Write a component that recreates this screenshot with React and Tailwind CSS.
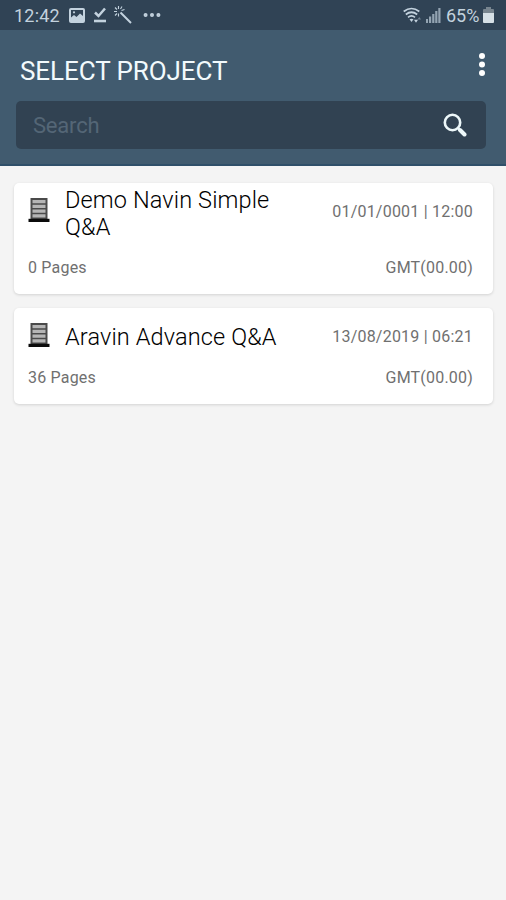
import { MoreHorizontal } from "lucide-react";

const projects = [
  {
    name: "Demo Navin Simple Q&A",
    date: "01/01/0001 | 12:00",
    pages: "0 Pages",
    zone: "GMT(00.00)",
    tall: true,
  },
  {
    name: "Aravin Advance Q&A",
    date: "13/08/2019 | 06:21",
    pages: "36 Pages",
    zone: "GMT(00.00)",
    tall: false,
  },
];

function StatusBar() {
  return (
    <div className="flex h-[30px] items-center bg-[#304355] pr-[12px] pl-[14px] text-[#c3d2de]">
      <span className="mt-0.5 w-[47px] text-[18px] leading-[30px] tracking-[0.2px] whitespace-nowrap">
        12:42
      </span>

      {/* Notification icons */}
      <svg className="ml-[8px] h-[15px] w-[16px]" viewBox="0 0 16 15">
        <path
          fill="currentColor"
          fillRule="evenodd"
          d="M2 0h12a2 2 0 0 1 2 2v11a2 2 0 0 1-2 2H2a2 2 0 0 1-2-2V2a2 2 0 0 1 2-2zM2 2v7.500l3-2.500 2.500 2 3.500-3.500 3 2.500V2z"
        />
        <circle cx="5" cy="4.300" r="1.100" fill="currentColor" />
      </svg>
      <svg className="ml-[8px] h-[16px] w-[14px]" viewBox="0 0 14 16" fill="none" stroke="currentColor">
        <path d="M2 5.500L5.500 9 12 1.500" strokeWidth="2.500" />
        <path d="M1 14h12" strokeWidth="2.600" />
      </svg>
      <svg className="ml-[7px] h-[18px] w-[18px]" viewBox="0 0 18 18" fill="none" stroke="currentColor">
        <path d="M6.500 6.500L17 17" strokeWidth="2" />
        <path d="M4.500 0v3M4.500 7.500v3M0 5.500h3M7.500 4.500l3-1M1 1.500l2 2M8 .500l-1.500 2.500M1 9.500l2-2" strokeWidth="1.100" />
      </svg>
      <MoreHorizontal className="-mt-px ml-[9px] h-[22px] w-[22px]" strokeWidth={2.4} />

      {/* Connection and battery */}
      <svg className="ml-auto h-[17px] w-[19px]" viewBox="0 0 19 17" fill="none" stroke="currentColor">
        <path d="M.700 4.500q7.800-6 15.600 0M2.800 7.500q5.700-4.500 11.400 0M5 10.300q3.500-2.800 7 0" strokeWidth="1.700" />
        <path d="M8.500 15l-2-2.700q2-1.300 4 0z" fill="currentColor" stroke="none" />
        <path d="M11 12.700h4l-2 3z" fill="currentColor" stroke="none" />
        <path d="M14.500 12.500l1.800-2.500 1.700 2.500z" fill="currentColor" stroke="none" opacity=".45" />
      </svg>
      <svg className="ml-[4px] h-[16px] w-[15px]" viewBox="0 0 15 16" fill="currentColor" opacity=".68">
        <path d="M0 12h2v4H0zM3 9.500h2.200V16H3zM6.200 7h2.200v9H6.200zM9.200 4h2.200v12H9.200zM12.300 1h2.200v15h-2.200z" />
      </svg>
      <span className="mt-0.5 ml-[5px] w-[34px] text-[18px] leading-[30px] whitespace-nowrap">65%</span>
      <svg className="ml-[3px] h-[17px] w-[11px]" viewBox="0 0 11 17">
        <path d="M3 0h5v2h2a1 1 0 0 1 1 1v4H0V3a1 1 0 0 1 1-1h2z" fill="#78858f" />
        <path d="M0 6h11v9a1 1 0 0 1-1 1H1a1 1 0 0 1-1-1z" fill="#d6e0e6" />
      </svg>
    </div>
  );
}

function ServerIcon() {
  return (
    <svg className="h-[26px] w-[22px] shrink-0" viewBox="0 0 22 26">
      <path d="M2.500 1h17v21h-17z" fill="#4a4a4a" />
      <path d="M4.500 3h13v3.300h-13zM4.500 7.700h13v3.300h-13zM4.500 12.500h13v3.300h-13zM4.500 17.200h13v3.300h-13z" fill="#b5b5b5" />
      <path d="M.500 21.800h21V25H.500z" fill="#0b0b0b" />
    </svg>
  );
}

function ProjectCard({ project }) {
  return (
    <div
      className={`flex flex-col rounded-[5px] bg-white pr-[20px] pl-[14px] text-[#707070] shadow-[0_1px_3px_rgba(0,0,0,0.14)] ${
        project.tall ? "h-[111px]" : "h-[96px]"
      }`}
    >
      <div className={`flex ${project.tall ? "h-[71px]" : "h-[56px]"}`}>
        <div className="mt-[14px]">
          <ServerIcon />
        </div>
        <h2
          className={`ml-[15px] w-[225px] text-[23.500px] leading-[27px] font-light tracking-[0.13px] text-black ${
            project.tall ? "mt-[4px]" : "mt-[16px]"
          }`}
        >
          {project.name}
        </h2>
        <span className="mt-[17.500px] ml-auto text-[16px] leading-[22px] tracking-[0.22px] whitespace-nowrap">
          {project.date}
        </span>
      </div>
      <div className="flex justify-between text-[16px] leading-[28px] tracking-[0.2px]">
        <span>{project.pages}</span>
        <span>{project.zone}</span>
      </div>
    </div>
  );
}

export default function App() {
  return (
    <div className="h-[900px] w-[506px] overflow-hidden bg-[#f4f4f4] font-[Roboto,sans-serif]">
      <StatusBar />

      {/* Header */}
      <header className="h-[136px] border-b-2 border-[#2f4f69] bg-[#415b6f] pr-[20px] pl-[16px]">
        <div className="flex h-[71px] justify-between">
          <h1 className="mt-[25px] ml-[4px] text-[26px] leading-[32px] tracking-[-0.08px] text-[#f2fafd]">
            SELECT PROJECT
          </h1>
          <svg className="mt-[22px] h-[26px] w-[8px]" viewBox="0 0 8 26" fill="#fff">
            <circle cx="4" cy="4" r="3" />
            <circle cx="4" cy="12.500" r="3" />
            <circle cx="4" cy="21" r="3" />
          </svg>
        </div>
        <div className="flex h-[48px] items-center justify-between rounded-[5px] bg-[#314252] pr-[19px] pl-[17px]">
          <span className="text-[22px] tracking-[-0.2px] text-[#546676]">Search</span>
          <svg className="h-[24px] w-[24px]" viewBox="0 0 24 24" fill="none" stroke="#edf8fa">
            <circle cx="9.500" cy="9.500" r="7.700" strokeWidth="2.600" />
            <path d="M15 15l1.500 1.500" strokeWidth="2.400" />
            <path d="M17 17l4.500 4.500" strokeWidth="4" strokeLinecap="round" />
          </svg>
        </div>
      </header>

      {/* Project list */}
      <main className="flex flex-col gap-[14px] pt-[17px] pr-[13px] pl-[14px]">
        {projects.map((project) => (
          <ProjectCard key={project.name} project={project} />
        ))}
      </main>
    </div>
  );
}
